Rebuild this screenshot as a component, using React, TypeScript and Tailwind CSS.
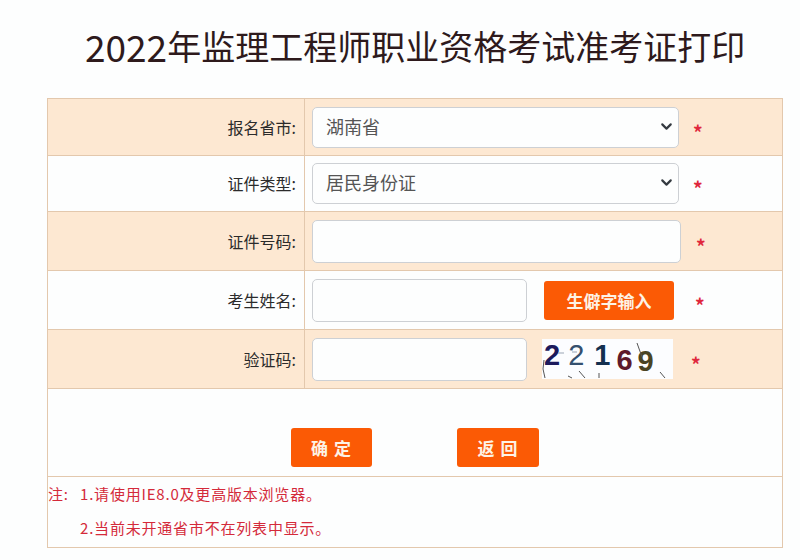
import React from "react";
import { ChevronDown } from "lucide-react";

const cjk = "font-['Noto_Sans_CJK_SC','Liberation_Sans',sans-serif]";

interface RowProps {
  label: string;
  shaded?: boolean;
  height: string;
  children: React.ReactNode;
}

const Row: React.FC<RowProps> = ({ label, shaded, height, children }) => (
  <div className={`flex border-b border-[#e3c8ad] ${height} ${shaded ? "bg-[#fde8d2]" : "bg-[#fdfefe]"}`}>
    <div className="flex w-[257px] shrink-0 items-center justify-end border-r border-[#e3c8ad] pb-[1px] pr-[8px] text-[16px] text-[#2b2b2b]">
      {label}
    </div>
    <div className="flex flex-1 items-center">{children}</div>
  </div>
);

const Star: React.FC<{ className: string }> = ({ className }) => (
  <span className={`text-[19px] font-bold leading-none text-[#e0283c] ${className}`}>*</span>
);

const SelectBox: React.FC<{ value: string }> = ({ value }) => (
  <div className="relative ml-[7px] h-[41px] w-[367px]">
    <select
      defaultValue={value}
      className="h-full w-full appearance-none rounded-[5px] border border-[#cdd0d4] bg-[#fdfefe] pb-[2px] pl-[13px] text-[18px] text-[#555555]"
    >
      <option>{value}</option>
    </select>
    <ChevronDown className="pointer-events-none absolute right-[4px] top-[11px] h-[17px] w-[17px] text-[#343a40]" strokeWidth={3} />
  </div>
);

const TextBox: React.FC<{ width: string; height: string }> = ({ width, height }) => (
  <input type="text" className={`ml-[7px] rounded-[5px] border border-[#cdd0d4] bg-[#fdfefe] ${width} ${height}`} />
);

const OrangeButton: React.FC<{ title: string; className: string }> = ({ title, className }) => (
  <button className={`h-[39px] rounded-[3px] bg-[#fb5a05] font-bold text-[#fdf3e6] ${className}`}>{title}</button>
);

const Captcha: React.FC = () => (
  <div className="relative ml-[15px] flex h-[40px] w-[131px] items-start bg-[#fcfdff] pl-[2px] font-['Liberation_Sans',sans-serif] text-[29px] font-bold leading-[32px]">
    <span className="text-[#1c1a5c]">2</span>
    <span className="ml-[8px] font-normal text-[#35506e]">2</span>
    <span className="ml-[10px] text-[#14304f]">1</span>
    <span className="ml-[6px] mt-[5px] text-[#5e1a2c]">6</span>
    <span className="ml-[5px] mt-[6px] text-[#4a4424]">9</span>
    <svg className="absolute left-0 top-0 h-[40px] w-[131px]" viewBox="0 0 131 40" fill="none" stroke="#555555" strokeWidth="1">
      <path d="M2 21 L1 30 L3 39" />
      <path d="M26 37 L30 39" />
      <path d="M37 32 L43 39" />
      <path d="M57 34 L57 39" />
      <path d="M95 4 L100 18" />
      <path d="M118 33 L123 39" />
      <path d="M16 14 L22 14 M30 13 L35 13" stroke="#9aa5b5" />
    </svg>
  </div>
);

export default function App() {
  return (
    <div className={`h-[560px] w-[800px] overflow-hidden bg-[#fdfefe] ${cjk}`}>
      <h1 className="ml-[85px] flex h-[98px] items-center pb-[6px] text-[34px] font-normal leading-none text-[#2e1a1c]">
        <span className="text-[37px]">2022</span>年监理工程师职业资格考试准考证打印
      </h1>
      <div className="ml-[47px] w-[736px] border-x border-t border-[#e3c8ad]">
        <Row label="报名省市:" shaded height="h-[57px]">
          <SelectBox value="湖南省" />
          <Star className="ml-[14px] mt-[8px]" />
        </Row>
        <Row label="证件类型:" height="h-[56px]">
          <SelectBox value="居民身份证" />
          <Star className="ml-[14px] mt-[8px]" />
        </Row>
        <Row label="证件号码:" shaded height="h-[59px]">
          <TextBox width="w-[369px]" height="h-[43px]" />
          <Star className="ml-[15px] mt-[8px]" />
        </Row>
        <Row label="考生姓名:" height="h-[59px]">
          <TextBox width="w-[215px]" height="h-[43px]" />
          <OrangeButton title="生僻字输入" className="ml-[17px] mt-[1px] w-[130px] text-[17px]" />
          <Star className="ml-[21px] mt-[8px]" />
        </Row>
        <Row label="验证码:" shaded height="h-[59px]">
          <TextBox width="w-[215px]" height="h-[43px]" />
          <Captcha />
          <Star className="ml-[18px] mt-[8px]" />
        </Row>
        <div className="flex h-[88px] items-start border-b border-[#e3c8ad] pl-[243px] pt-[39px]">
          <OrangeButton title="确 定" className="w-[81px] text-[17px] tracking-[1px]" />
          <OrangeButton title="返 回" className="ml-[85px] w-[82px] text-[17px] tracking-[1px]" />
        </div>
        <div className="h-[71px] border-b border-[#e3c8ad] text-[15px] tracking-[0.8px] text-[#d42a3a]">
          <p className="flex pt-[7px] leading-[20px]">
            <span className="w-[32px]">注:</span>
            <span>1.请使用IE8.0及更高版本浏览器。</span>
          </p>
          <p className="pl-[32px] pt-[14px] leading-[20px]">2.当前未开通省市不在列表中显示。</p>
        </div>
      </div>
    </div>
  );
}
